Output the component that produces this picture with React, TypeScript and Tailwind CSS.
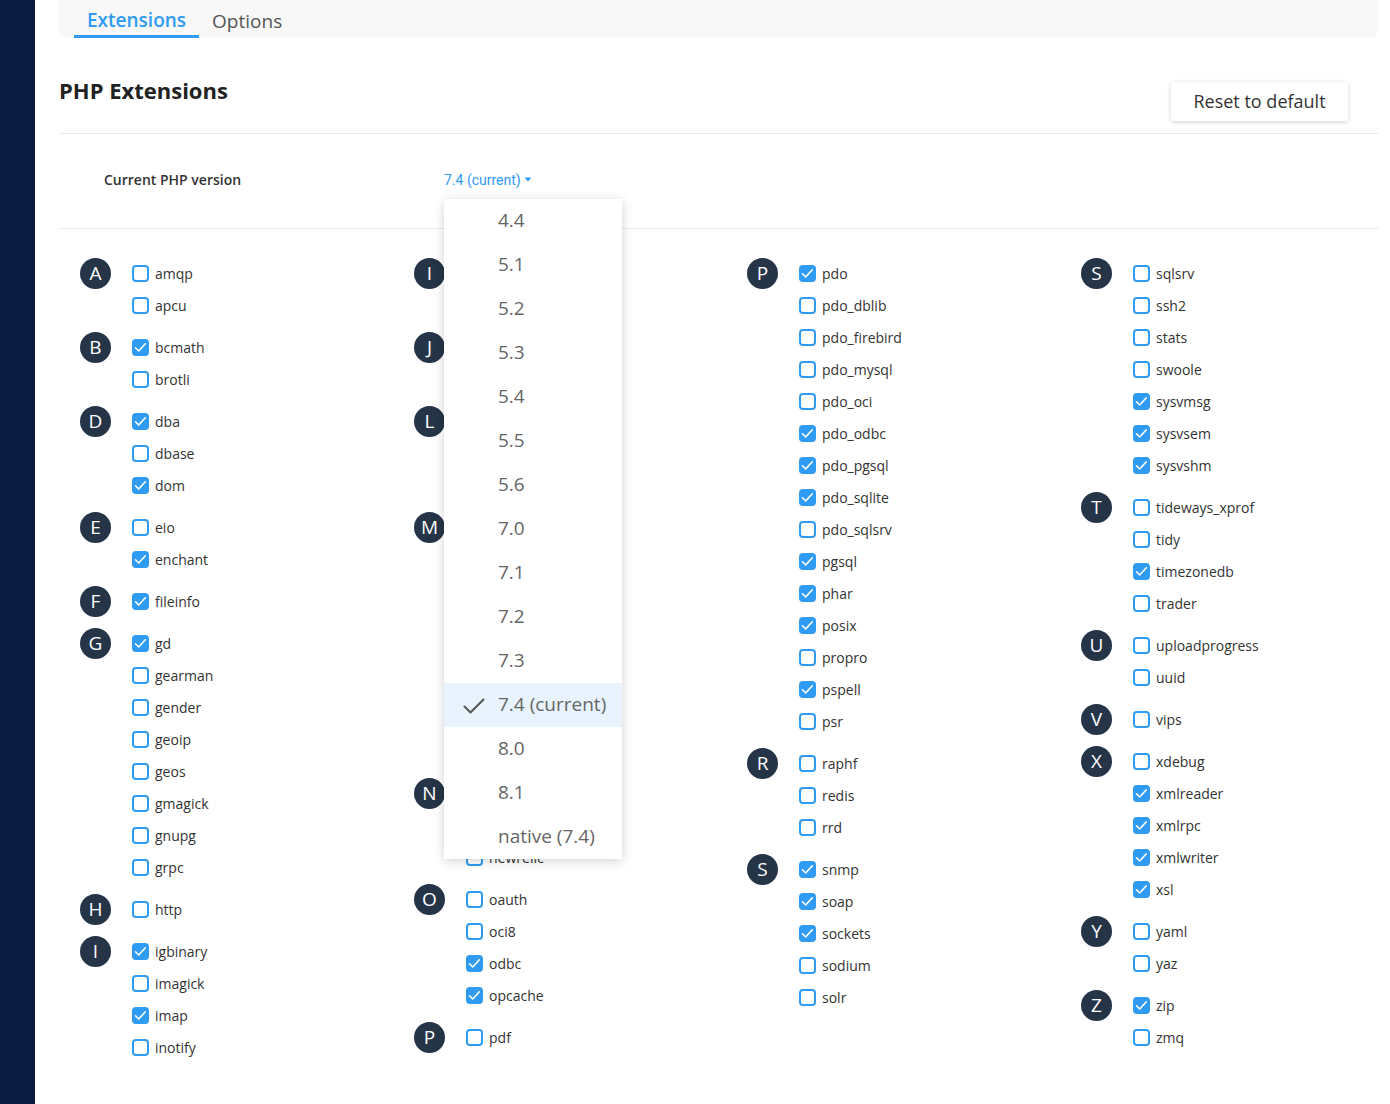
import React from 'react';

type Ext = [string, boolean];
type Group = { letter: string; items: Ext[] };

const columns: Group[][] = [
  [
    { letter: 'A', items: [['amqp', false], ['apcu', false]] },
    { letter: 'B', items: [['bcmath', true], ['brotli', false]] },
    { letter: 'D', items: [['dba', true], ['dbase', false], ['dom', true]] },
    { letter: 'E', items: [['eio', false], ['enchant', true]] },
    { letter: 'F', items: [['fileinfo', true]] },
    {
      letter: 'G',
      items: [['gd', true], ['gearman', false], ['gender', false], ['geoip', false], ['geos', false], ['gmagick', false], ['gnupg', false], ['grpc', false]],
    },
    { letter: 'H', items: [['http', false]] },
    { letter: 'I', items: [['igbinary', true], ['imagick', false], ['imap', true], ['inotify', false]] },
  ],
  [
    { letter: 'I', items: [['interbase', false], ['intl', true]] },
    { letter: 'J', items: [['json', true], ['jsmin', false]] },
    { letter: 'L', items: [['ldap', false], ['luasandbox', false], ['lzf', false]] },
    {
      letter: 'M',
      items: [['mailparse', false], ['mbstring', true], ['mcrypt', false], ['memcache', false], ['memcached', false], ['mongodb', false], ['msgpack', false], ['mysqlnd', true]],
    },
    { letter: 'N', items: [['nd_mysqli', true], ['nd_pdo_mysql', true], ['newrelic', false]] },
    { letter: 'O', items: [['oauth', false], ['oci8', false], ['odbc', true], ['opcache', true]] },
    { letter: 'P', items: [['pdf', false]] },
  ],
  [
    {
      letter: 'P',
      items: [
        ['pdo', true], ['pdo_dblib', false], ['pdo_firebird', false], ['pdo_mysql', false], ['pdo_oci', false],
        ['pdo_odbc', true], ['pdo_pgsql', true], ['pdo_sqlite', true], ['pdo_sqlsrv', false], ['pgsql', true],
        ['phar', true], ['posix', true], ['propro', false], ['pspell', true], ['psr', false],
      ],
    },
    { letter: 'R', items: [['raphf', false], ['redis', false], ['rrd', false]] },
    { letter: 'S', items: [['snmp', true], ['soap', true], ['sockets', true], ['sodium', false], ['solr', false]] },
  ],
  [
    {
      letter: 'S',
      items: [['sqlsrv', false], ['ssh2', false], ['stats', false], ['swoole', false], ['sysvmsg', true], ['sysvsem', true], ['sysvshm', true]],
    },
    { letter: 'T', items: [['tideways_xprof', false], ['tidy', false], ['timezonedb', true], ['trader', false]] },
    { letter: 'U', items: [['uploadprogress', false], ['uuid', false]] },
    { letter: 'V', items: [['vips', false]] },
    { letter: 'X', items: [['xdebug', false], ['xmlreader', true], ['xmlrpc', true], ['xmlwriter', true], ['xsl', true]] },
    { letter: 'Y', items: [['yaml', false], ['yaz', false]] },
    { letter: 'Z', items: [['zip', true], ['zmq', false]] },
  ],
];

const versions = ['4.4', '5.1', '5.2', '5.3', '5.4', '5.5', '5.6', '7.0', '7.1', '7.2', '7.3', '7.4 (current)', '8.0', '8.1', 'native (7.4)'];

const Checkbox: React.FC<{ checked: boolean }> = ({ checked }) =>
  checked ? (
    <span className="w-[17px] h-[17px] rounded-[4px] bg-[#2f9bf2] flex items-center justify-center shrink-0">
      <svg width="15" height="15" viewBox="0 0 15 15" fill="none">
        <path d="M2.5 7.8l3.2 3.2 6.6-7.2" stroke="#fff" strokeWidth="1.6" strokeLinecap="round" strokeLinejoin="round" />
      </svg>
    </span>
  ) : (
    <span className="w-[17px] h-[17px] rounded-[4px] border-2 border-[#2f9bf2] bg-white shrink-0" />
  );

const App: React.FC = () => {
  return (
    <div className="flex min-h-[1104px] bg-white text-[#333] overflow-hidden" style={{ fontFamily: '"Open Sans", "Noto Sans", sans-serif' }}>
      <aside className="w-[35px] shrink-0 bg-[#0b1a3f]" />
      <main className="w-[1355px] shrink-0 pl-[24px] pr-[12px]">
        {/* tabs */}
        <div className="h-[38px] bg-[#f8f8f8] rounded-b-[8px] flex items-end pl-[15px]">
          <div className="h-[38px] px-[13px] flex items-center border-b-[3px] border-[#2f9bf2] text-[19px] font-semibold text-[#2f9bf2] pt-[6px]">
            Extensions
          </div>
          <div className="h-[38px] px-[13px] flex items-center text-[19px] text-[#555] pt-[4px]">Options</div>
        </div>

        {/* header */}
        <div className="h-[96px] border-b border-[#e9e9e9] flex items-start justify-between">
          <h1 className="mt-[37px] text-[22px] leading-[30px] font-bold text-[#222]">PHP Extensions</h1>
          <button className="mt-[44px] mr-[30px] w-[177px] h-[39px] rounded-[3px] bg-white text-[18px] text-[#333] shadow-[0_1px_5px_rgba(0,0,0,0.18)]">
            Reset to default
          </button>
        </div>

        {/* version row */}
        <div className="h-[95px] border-b border-[#e9e9e9] flex items-center pl-[45px] pb-[3px]">
          <div className="w-[340px] text-[14px] font-semibold text-[#333]">Current PHP version</div>
          <div className="relative">
            <button className="flex items-center gap-[3px] text-[14px] leading-[20px] text-[#2f9bf2]" style={{ fontFamily: 'Roboto, "Open Sans", sans-serif' }}>
              7.4 (current)
              <svg width="8" height="5" viewBox="0 0 8 5"><path d="M0.5 0.5h7L4 4.5z" fill="#2f9bf2" /></svg>
            </button>
            <div className="absolute left-0 top-[29px] z-10 w-[178px] bg-white shadow-[0_2px_10px_rgba(0,0,0,0.18)]">
              {versions.map((v) => {
                const sel = v === '7.4 (current)';
                return (
                  <div key={v} className={`relative h-[44px] flex items-center pl-[54px] text-[19px] text-[#666] ${sel ? 'bg-[#e8f3fd]' : ''}`}>
                    {sel && (
                      <svg className="absolute left-[19px] top-[15px]" width="22" height="16" viewBox="0 0 22 16" fill="none">
                        <path d="M1.5 8.5l6 6L20.5 1.5" stroke="#555" strokeWidth="2" strokeLinecap="round" strokeLinejoin="round" />
                      </svg>
                    )}
                    {v}
                  </div>
                );
              })}
            </div>
          </div>
        </div>

        {/* extensions grid */}
        <div className="grid grid-cols-[334px_333px_334px_334px] pl-[21px] pt-[28px] pb-[40px]">
          {columns.map((col, ci) => (
            <div key={ci} className="flex flex-col gap-[10px]">
              {col.map((g, gi) => (
                <div key={gi} className="flex">
                  <div className="w-[52px] shrink-0">
                    <div className="w-[31px] h-[31px] mt-[1px] rounded-full bg-[#253447] text-white text-[19px] flex items-center justify-center">
                      {g.letter}
                    </div>
                  </div>
                  <div className="flex flex-col">
                    {g.items.map(([name, checked]) => (
                      <label key={name} className="h-[32px] flex items-center gap-[6px] text-[14px] text-[#333]">
                        <Checkbox checked={checked} />
                        {name}
                      </label>
                    ))}
                  </div>
                </div>
              ))}
            </div>
          ))}
        </div>
      </main>
    </div>
  );
};

export default App;
